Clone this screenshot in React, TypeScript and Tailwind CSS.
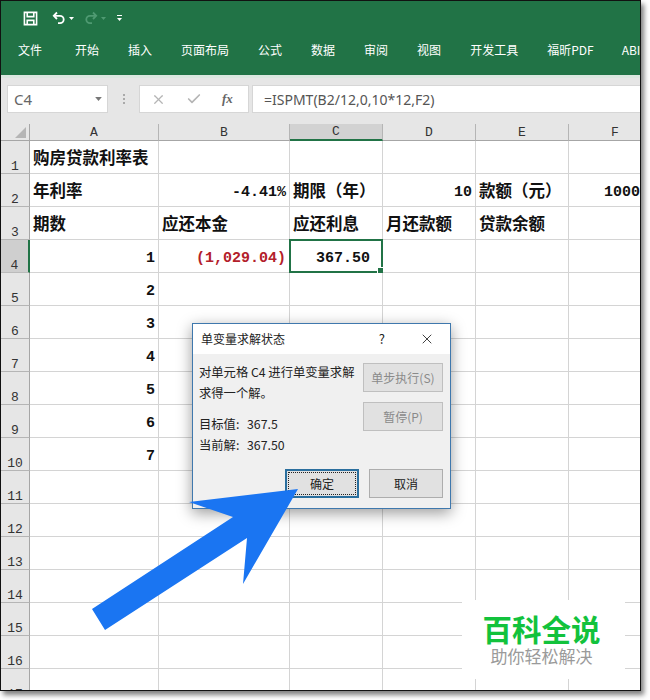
import React from 'react';
import { Check, X } from 'lucide-react';

const CJK = "font-['Noto_Sans_CJK_SC','Noto_Sans',sans-serif]";
const MONO = "font-['Liberation_Mono','Noto_Sans_CJK_SC',monospace]";

const tabs = ['开始', '插入', '页面布局', '公式', '数据', '审阅', '视图', '开发工具', '福昕PDF'];
const cols = ['A', 'B', 'C', 'D', 'E', 'F'];
const rows = Array.from({ length: 17 }, (_, i) => i + 1);

type CellData = { text: string; right?: boolean; mono?: boolean; red?: boolean; pr?: string };

const cells: Record<string, CellData> = {
  A1: { text: '购房贷款利率表' },
  A2: { text: '年利率' },
  B2: { text: '-4.41%', right: true, mono: true },
  C2: { text: '期限（年）' },
  D2: { text: '10', right: true, mono: true },
  E2: { text: '款额（元）' },
  F2: { text: '1000', right: true, mono: true, pr: 'pr-[21px]' },
  A3: { text: '期数' },
  B3: { text: '应还本金' },
  C3: { text: '应还利息' },
  D3: { text: '月还款额' },
  E3: { text: '贷款余额' },
  A4: { text: '1', right: true, mono: true },
  B4: { text: '(1,029.04)', right: true, mono: true, red: true },
  A5: { text: '2', right: true, mono: true },
  A6: { text: '3', right: true, mono: true },
  A7: { text: '4', right: true, mono: true },
  A8: { text: '5', right: true, mono: true },
  A9: { text: '6', right: true, mono: true },
  A10: { text: '7', right: true, mono: true },
};

const SaveIcon = () => (
  <svg width="15" height="15" viewBox="0 0 16 16" fill="none" stroke="#fff" strokeWidth="1.7">
    <path d="M1.5 1.5h13v13h-13z" />
    <path d="M4.5 2v4h7V2M4.5 14.5V10h7v4.5" />
  </svg>
);

const Undo = ({ color, flip }: { color: string; flip?: boolean }) => (
  <svg width="14" height="14" viewBox="0 0 14 14" fill="none" stroke={color} strokeWidth="1.8" className={flip ? '-scale-x-100' : ''}>
    <path d="M5 1.5 1.8 4.8 5 8" />
    <path d="M2 4.8h6a3.6 3.6 0 0 1 0 7.4H6" />
  </svg>
);

const Caret = ({ color, w = 5, h = 3 }: { color: string; w?: number; h?: number }) => (
  <svg width={w} height={h} viewBox="0 0 5 3" fill={color}>
    <path d="M0 0h5L2.5 3z" />
  </svg>
);

const DialogButton = ({ label, disabled, w }: { label: string; disabled?: boolean; w: string }) => (
  <div className={`${w} h-[29px] flex items-center justify-center bg-[#e1e1e1] border border-[#adadad] text-[12px] ${disabled ? 'text-[#8a8a8a] border-[#bfbfbf]' : 'text-[#222]'}`}>
    {label}
  </div>
);

export default function App() {
  return (
    <div className={`w-[650px] h-[700px] bg-white ${CJK}`}>
      <div className="relative w-[641px] h-[691px] overflow-hidden border border-[#111] shadow-[3px_4px_5px_rgba(0,0,0,0.5)] bg-white">
        {/* ribbon */}
        <div className="h-[74px] bg-[#217346] text-white">
          <div className="h-[34px] flex items-center pl-[22px]">
            <SaveIcon />
            <div className="ml-[14px]"><Undo color="#fff" /></div>
            <div className="ml-[3px]"><Caret color="#fff" /></div>
            <div className="ml-[10px]"><Undo color="#4f9a72" flip /></div>
            <div className="ml-[3px]"><Caret color="#4f9a72" /></div>
            <div className="ml-[11px] flex flex-col items-center gap-[2px]">
              <div className="w-[5px] h-px bg-white" />
              <Caret color="#fff" />
            </div>
          </div>
          <div className="flex items-center pl-[17px] text-[12px] leading-[30px] whitespace-nowrap">
            <span className="mr-[33px]">文件</span>
            <div className="flex items-center gap-[29px]">
              {tabs.map((t) => <span key={t}>{t}</span>)}
              <span className="-ml-px">ABI</span>
            </div>
          </div>
        </div>

        {/* formula bar */}
        <div className="h-[49px] bg-[#e6e6e6] border-t-[3px] border-[#dbe7e0] pt-[7px] flex items-start pl-[6px]">
          <div className="w-[101px] h-[28px] bg-white border border-[#d6d6d6] flex items-center justify-between pl-[6px] pr-[5px] text-[15px] text-[#666] font-['Noto_Sans',sans-serif]">
            C4
            <Caret color="#777" w={7} h={4} />
          </div>
          <div className="w-[31px] h-[28px] flex items-center justify-center">
            <div className="flex flex-col gap-[2px]">
              <div className="w-[2px] h-[2px] bg-[#aaa]" />
              <div className="w-[2px] h-[2px] bg-[#aaa]" />
              <div className="w-[2px] h-[2px] bg-[#aaa]" />
            </div>
          </div>
          <div className="w-[110px] h-[28px] bg-white border border-[#d6d6d6] flex items-center pl-[11px]">
            <X size={15} color="#b5b5b5" strokeWidth={2} />
            <Check size={16} color="#b5b5b5" strokeWidth={2.5} className="ml-[20px]" />
            <span className="ml-[20px] text-[13px] italic font-bold text-[#666] font-['Liberation_Serif',serif]">fx</span>
          </div>
          <div className="flex-1 ml-[3px] h-[28px] bg-white border border-[#d6d6d6] border-r-0 pl-[11px] flex items-center text-[14px] text-[#555] font-['Noto_Sans',sans-serif]">
            =ISPMT(B2/12,0,10*12,F2)
          </div>
        </div>

        {/* sheet */}
        <div className="grid grid-cols-[29px_129px_131px_93px_93px_93px_93px] auto-rows-[33px] [grid-template-rows:17px]">
          <div className="relative bg-[#e6e6e6] border-r border-b border-[#a6a6a6] h-[17px]">
            <div className="absolute right-[3px] bottom-[2px] w-0 h-0 border-l-[11px] border-l-transparent border-b-[11px] border-b-[#b5b5b5]" />
          </div>
          {cols.map((c) => (
            <div
              key={c}
              className={`h-[17px] flex items-center justify-center pt-px text-[13px] text-[#333] ${MONO} border-r border-[#b5b5b5] ${c === 'C' ? 'bg-[#d2d2d2] border-b-2 border-b-[#217346]' : 'bg-[#e6e6e6] border-b border-b-[#a6a6a6]'}`}
            >
              {c}
            </div>
          ))}
          {rows.map((r) => (
            <React.Fragment key={r}>
              <div
                className={`flex items-end justify-center text-[13px] leading-[12px] text-[#333] ${MONO} border-b ${r === 4 ? 'bg-[#cfcfcf] border-r-2 border-r-[#217346] border-b-[#bbb]' : 'bg-[#e6e6e6] border-r border-r-[#a6a6a6] border-b-[#b5b5b5]'}`}
              >
                {r}
              </div>
              {cols.map((c) => {
                const cell = cells[`${c}${r}`];
                return (
                  <div key={c} className="relative border-r border-b border-[#d4d4d4] flex items-center whitespace-nowrap overflow-visible">
                    {cell && (
                      <span
                        className={`w-full font-bold text-[#111] ${cell.right ? `text-right ${cell.pr ?? 'pr-[3px]'}` : 'pl-[3px]'} ${cell.mono ? `text-[15px] pt-[7px] ${MONO}` : 'text-[16.5px]'} ${cell.red ? 'text-[#b3202a]' : ''}`}
                      >
                        {cell.text}
                      </span>
                    )}
                    {c === 'C' && r === 4 && (
                      <div className="absolute -left-px -top-px w-[94px] h-[34px] border-2 border-[#217346] flex items-center justify-end pr-[11px] pt-[7px]">
                        <span className={`text-[15px] font-bold text-[#111] ${MONO}`}>367.50</span>
                        <div className="absolute -right-[3px] -bottom-[3px] w-[5px] h-[5px] bg-[#217346] border border-white box-content" />
                      </div>
                    )}
                  </div>
                );
              })}
            </React.Fragment>
          ))}
        </div>

        {/* goal seek dialog */}
        <div className="absolute left-[191px] top-[322px] w-[259px] h-[186px] bg-[#f0f0f0] border border-[#3f78ad] shadow-[0_4px_14px_rgba(0,0,0,0.4)] text-[#222]">
          <div className="h-[30px] bg-white flex items-center pl-[8px] pr-[15px] text-[12px]">
            <span className="flex-1">单变量求解状态</span>
            <span className="text-[13px]">?</span>
            <X size={16} color="#333" strokeWidth={1.4} className="ml-[34px]" />
          </div>
          <div className="flex pl-[6px] pt-[9px]">
            <div className="w-[164px] -mt-px text-[12.3px] leading-[21px] whitespace-nowrap">
              <div>对单元格 C4 进行单变量求解</div>
              <div>求得一个解。</div>
              <div className="mt-[10px] flex"><span className="w-[48px]">目标值:</span>367.5</div>
              <div className="flex"><span className="w-[48px]">当前解:</span>367.50</div>
            </div>
            <div className="flex flex-col gap-[10px]">
              <DialogButton label="单步执行(S)" disabled w="w-[80px]" />
              <DialogButton label="暂停(P)" disabled w="w-[80px]" />
            </div>
          </div>
          <div className="flex justify-end gap-[10px] pr-[7px] mt-[13px]">
            <div className="w-[74px] h-[29px] border-2 border-[#2b6f9e] bg-[#e1e1e1] p-px">
              <div className="h-full border border-dotted border-[#222] flex items-center justify-center text-[12px]">确定</div>
            </div>
            <DialogButton label="取消" w="w-[74px]" />
          </div>
        </div>

        {/* arrow annotation */}
        <svg className="absolute left-[-1px] top-[-1px] pointer-events-none" width="641" height="691" viewBox="0 0 641 691">
          <polygon points="298,489 189,502 233,517 92,609 105,630 247,538 243,584" fill="#1a75f2" />
        </svg>

        {/* watermark */}
        <div className="absolute left-[461px] top-[599px] w-[163px] h-[79px] bg-white flex flex-col items-center pt-[9px] pr-[4px]">
          <div className="text-[29.5px] leading-[38px] font-bold text-[#12c23c]">百科全说</div>
          <div className="text-[17px] leading-[18px] text-[#9a9a9a]">助你轻松解决</div>
        </div>
      </div>
    </div>
  );
}
